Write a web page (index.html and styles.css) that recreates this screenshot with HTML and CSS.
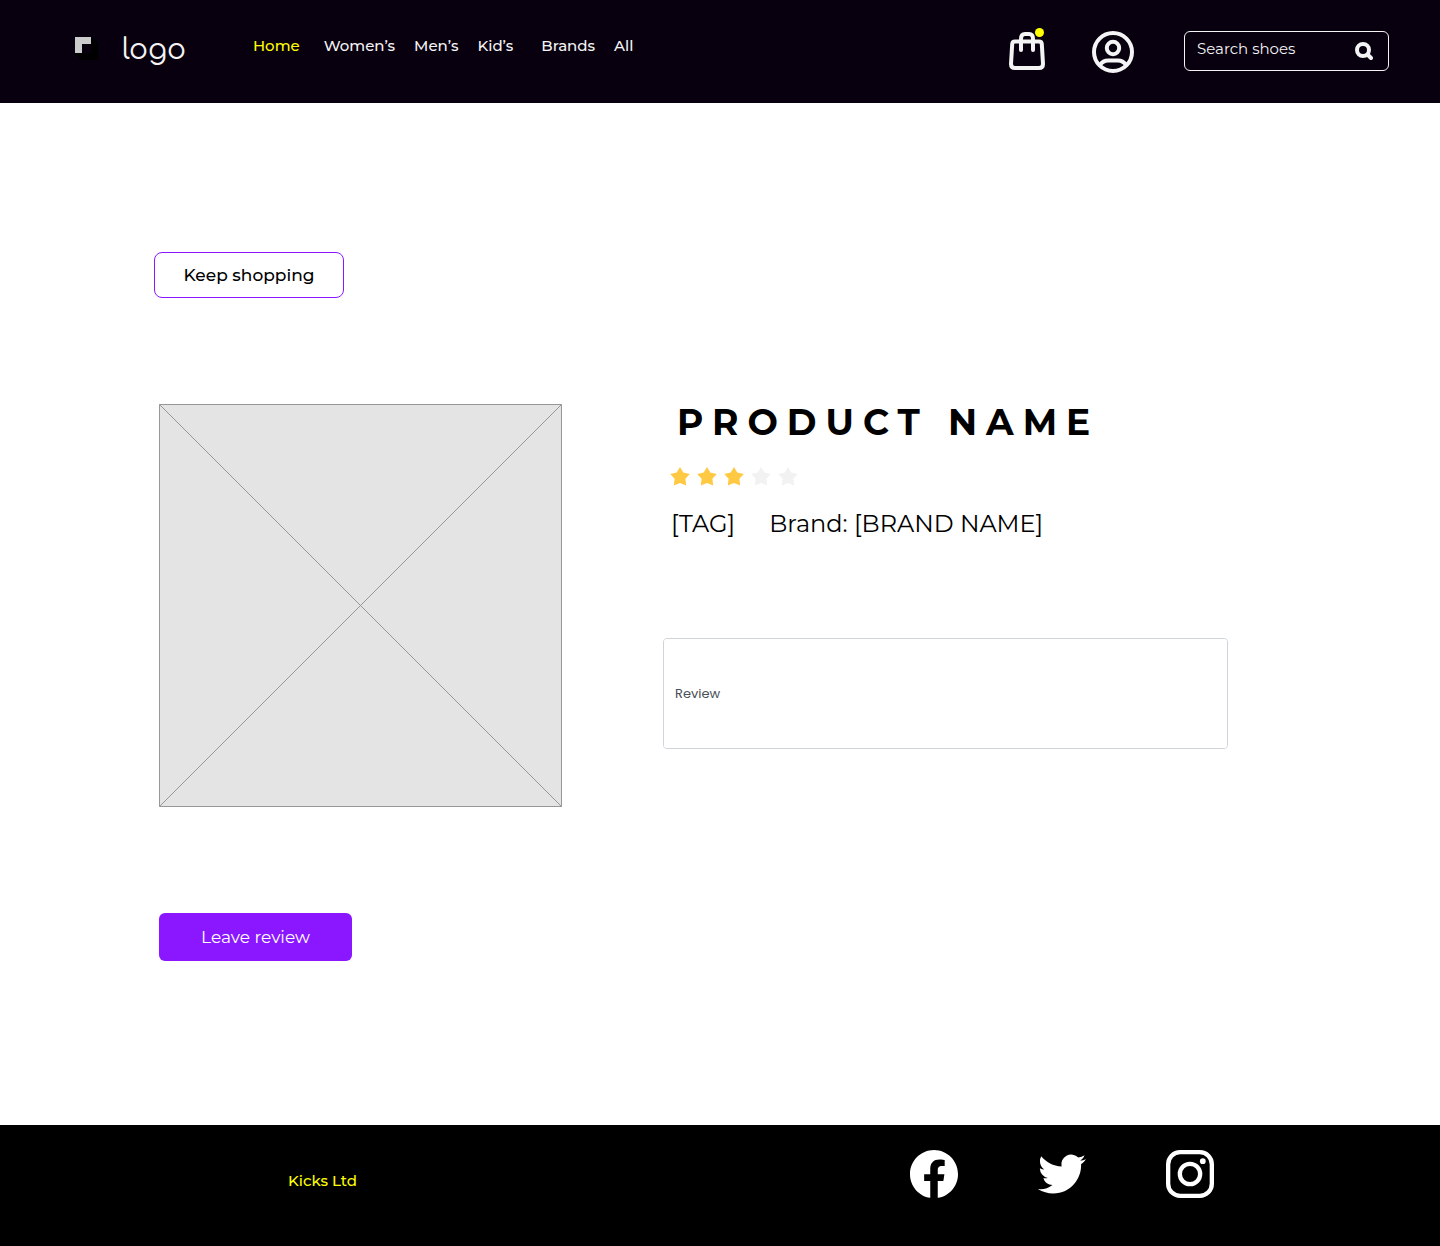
FILE: index.html
```html
<!DOCTYPE html>
<html lang="en">
<head>
<meta charset="utf-8">
<meta name="viewport" content="width=device-width, initial-scale=1">
<title>Product review</title>
<link rel="stylesheet" href="styles.css">
</head>
<body>
<header class="site-header">
  <a class="brand" href="#">
    <svg class="brand-mark" viewBox="0 0 24 24" aria-hidden="true">
      <path fill="#000" d="M16 0l7 6v17H6l-6-7h7V7h9z"/>
      <path fill="#08000f" d="M7 7h9v9H7z"/>
      <path fill="#ccc" d="M0 0h16v7H7v9H0z"/>
    </svg>
    <span class="brand-name">logo</span>
  </a>
  <nav class="main-nav" aria-label="Main">
    <a class="current" href="#">Home</a>
    <div class="nav-group">
      <a href="#">Women’s</a>
      <a href="#">Men’s</a>
      <a href="#">Kid’s</a>
    </div>
    <div class="nav-group">
      <a href="#">Brands</a>
      <a href="#">All</a>
    </div>
  </nav>
  <div class="actions">
    <a class="bag" href="#" aria-label="Shopping bag">
      <svg viewBox="0 0 36 42" width="36" height="42" fill="none" stroke="#f4f4f4" stroke-width="4" stroke-linecap="round" stroke-linejoin="round" aria-hidden="true">
        <path d="M6 13.500h24q2.600 0 2.800 2.500l1.200 20q0 4-4 4H6q-4 0-4-4l1.200-20q.2-2.500 2.800-2.500z"/>
        <path d="M12 22v-11q0-5 4-5h4q4 0 4 5v11"/>
        <circle cx="30.500" cy="4.500" r="4.500" fill="#ff0" stroke="none"/>
      </svg>
    </a>
    <a class="account" href="#" aria-label="Account">
      <svg viewBox="0 0 42 42" width="42" height="42" fill="none" stroke="#f4f4f4" stroke-width="4" aria-hidden="true">
        <circle cx="21" cy="21" r="19"/>
        <circle cx="21" cy="17" r="6.200"/>
        <path d="M8 34q3-4.500 8-4.500h10q5 0 8 4.500"/>
      </svg>
    </a>
    <form class="search" role="search">
      <input type="search" placeholder="Search shoes" aria-label="Search shoes">
      <button type="submit" aria-label="Search">
        <svg viewBox="0 0 18 18" width="18" height="18" fill="none" stroke="#f4f4f4" stroke-width="4" stroke-linecap="round" aria-hidden="true">
          <circle cx="8" cy="8" r="6"/>
          <path d="M12.500 12.500l3.500 3.500"/>
        </svg>
      </button>
    </form>
  </div>
</header>

<main class="page">
  <button class="btn btn-outline" type="button">Keep shopping</button>
  <section class="product">
    <svg class="photo" viewBox="0 0 403 403" role="img" aria-label="Product image">
      <path d="M.5.500h402v402H.5z" fill="#e4e4e4" stroke="#979797"/>
      <path d="M.5.500l402 402M402.500.500l-402 402" stroke="#979797"/>
    </svg>
    <div class="details">
      <h1>PRODUCT NAME</h1>
      <div class="stars" role="img" aria-label="3 out of 5 stars">
        <svg class="on" viewBox="0 0 20 19"><path d="M10 0l3.300 5.600 6.500 1.300-4.400 4.800.8 6.800L10 15.900l-6.200 2.600.8-6.800L.2 6.900l6.500-1.300z"/></svg>
        <svg class="on" viewBox="0 0 20 19"><path d="M10 0l3.300 5.600 6.500 1.300-4.400 4.800.8 6.800L10 15.900l-6.200 2.600.8-6.800L.2 6.900l6.500-1.300z"/></svg>
        <svg class="on" viewBox="0 0 20 19"><path d="M10 0l3.300 5.600 6.500 1.300-4.400 4.800.8 6.800L10 15.900l-6.200 2.600.8-6.800L.2 6.900l6.500-1.300z"/></svg>
        <svg viewBox="0 0 20 19"><path d="M10 0l3.300 5.600 6.500 1.300-4.400 4.800.8 6.800L10 15.900l-6.200 2.600.8-6.800L.2 6.900l6.500-1.300z"/></svg>
        <svg viewBox="0 0 20 19"><path d="M10 0l3.300 5.600 6.500 1.300-4.400 4.800.8 6.800L10 15.900l-6.200 2.600.8-6.800L.2 6.900l6.500-1.300z"/></svg>
      </div>
      <p class="meta"><span>[TAG]</span><span>Brand: [BRAND NAME]</span></p>
      <textarea class="review" placeholder="Review" aria-label="Review"></textarea>
    </div>
  </section>
  <button class="btn btn-solid" type="button">Leave review</button>
</main>

<footer class="site-footer">
  <span class="company">Kicks Ltd</span>
  <div class="social">
    <a href="#" aria-label="Facebook">
      <svg viewBox="0 0 24 24" aria-hidden="true"><path d="M24 12.073C24 5.446 18.627 0 12 0S0 5.446 0 12.073c0 5.990 4.388 10.954 10.125 11.854v-8.385H7.078v-3.470h3.047V9.430c0-3.007 1.792-4.669 4.533-4.669 1.312 0 2.686.235 2.686.235v2.953H15.830c-1.491 0-1.956.925-1.956 1.874v2.250h3.328l-.532 3.470h-2.796v8.385C19.612 23.027 24 18.062 24 12.073z"/></svg>
    </a>
    <a href="#" aria-label="Twitter">
      <svg viewBox="0 0 24 24" aria-hidden="true"><path d="M23.953 4.570a10 10 0 01-2.825.775 4.958 4.958 0 002.163-2.723c-.951.555-2.005.959-3.127 1.184a4.920 4.920 0 00-8.384 4.482C7.690 8.095 4.067 6.130 1.640 3.162a4.822 4.822 0 00-.666 2.475c0 1.710.870 3.213 2.188 4.096a4.904 4.904 0 01-2.228-.616v.060a4.923 4.923 0 003.946 4.827 4.996 4.996 0 01-2.212.085 4.936 4.936 0 004.604 3.417 9.867 9.867 0 01-6.102 2.105c-.39 0-.779-.023-1.170-.067a13.995 13.995 0 007.557 2.209c9.053 0 13.998-7.496 13.998-13.985 0-.210 0-.420-.015-.630A9.935 9.935 0 0024 4.590z"/></svg>
    </a>
    <a href="#" aria-label="Instagram">
      <svg viewBox="0 0 24 24" aria-hidden="true">
        <rect x="1.080" y="1.080" width="21.840" height="21.840" rx="6" fill="none" stroke="#fff" stroke-width="2.160"/>
        <circle cx="12" cy="12" r="5.080" fill="none" stroke="#fff" stroke-width="2.160"/>
        <circle cx="18.400" cy="5.600" r="1.440"/>
      </svg>
    </a>
  </div>
</footer>
</body>
</html>
```
FILE: styles.css
```css
* { box-sizing: border-box; }

body {
  margin: 0;
  min-height: 100vh;
  display: flex;
  flex-direction: column;
  background: #fff;
  color: #000;
  font-family: Montserrat, Inter, "Liberation Sans", sans-serif;
  font-size: 15px;
}

a { color: inherit; text-decoration: none; }
svg { display: block; }
button, input, textarea { font: inherit; }

.site-header {
  display: flex;
  align-items: center;
  min-height: 103px;
  padding: 0 51px 0 75px;
  background: #08000f;
  color: #f4f4f4;
}

.brand { display: flex; align-items: center; gap: 23px; padding-bottom: 2px; }
.brand-mark { width: 24px; height: 24px; margin-bottom: 4px; }
.brand-name {
  font-family: Comfortaa, Lato, sans-serif;
  font-weight: 400;
  font-size: 28px;
  line-height: 40px;
  padding-bottom: 2px;
}

.main-nav {
  display: flex;
  gap: 24px;
  margin-left: 67px;
  padding-bottom: 12px;
  line-height: 20px;
  font-weight: 500;
}
.nav-group { display: flex; gap: 19px; }
.nav-group + .nav-group { margin-left: 4px; }
.current { color: #ff0; }

.actions { display: flex; align-items: center; margin-left: auto; }
.bag { margin-right: 47px; padding-bottom: 6px; }
.account { margin-right: 50px; }

.search {
  display: flex;
  align-items: center;
  width: 205px;
  height: 40px;
  margin-bottom: 2px;
  padding: 0 15px 0 12px;
  border: 1px solid #f4f4f4;
  border-radius: 6px;
}
.search input {
  flex: 1;
  min-width: 0;
  padding: 0 0 4px;
  border: 0;
  outline: 0;
  background: none;
  color: #f4f4f4;
}
.search input::placeholder { color: #f4f4f4; opacity: 1; }
.search button { padding: 0; border: 0; background: none; cursor: pointer; }

.page { flex: 1; padding: 149px 212px 164px 154px; }

.btn { display: block; border-radius: 6px; font-size: 17px; cursor: pointer; }
.btn-outline {
  width: 190px;
  height: 46px;
  border: 1px solid #8a17ff;
  border-radius: 8px;
  background: #fff;
  color: #000;
  font-weight: 500;
}
.btn-solid {
  width: 193px;
  height: 48px;
  margin-left: 5px;
  border: 0;
  background: #8a17ff;
  color: #fff;
}

.product {
  display: grid;
  grid-template-columns: 403fr 565fr;
  gap: 101px;
  margin: 106px 0 106px 5px;
}
.photo { width: 100%; aspect-ratio: 1; }

h1 {
  margin: 0;
  padding-left: 14px;
  font-size: 36px;
  font-weight: 700;
  line-height: 36px;
  letter-spacing: 9px;
  white-space: nowrap;
}
.stars { display: flex; gap: 7px; margin: 27px 0 0 7px; }
.stars svg { width: 20px; height: 19px; fill: #f2f2f2; }
.stars .on { fill: #ffc944; }

.meta {
  display: flex;
  gap: 34px;
  margin: 22px 0 0 8px;
  font-size: 24px;
  line-height: 32px;
}

.review {
  display: block;
  width: 100%;
  height: 111px;
  margin-top: 98px;
  padding: 45px 11px;
  border: 1px solid #ced4da;
  border-radius: 4px;
  resize: none;
  background: #fff;
  font-family: Poppins, Inter, sans-serif;
  font-size: 13px;
  line-height: 20px;
}
.review::placeholder { color: #495057; opacity: 1; }

.site-footer {
  display: flex;
  align-items: center;
  justify-content: space-between;
  padding: 25px 226px 48px 288px;
  background: #000;
}
.company { padding-top: 12px; color: #ff0; font-weight: 500; }
.social { display: flex; gap: 80px; }
.social svg { width: 48px; height: 48px; fill: #fff; }
```
